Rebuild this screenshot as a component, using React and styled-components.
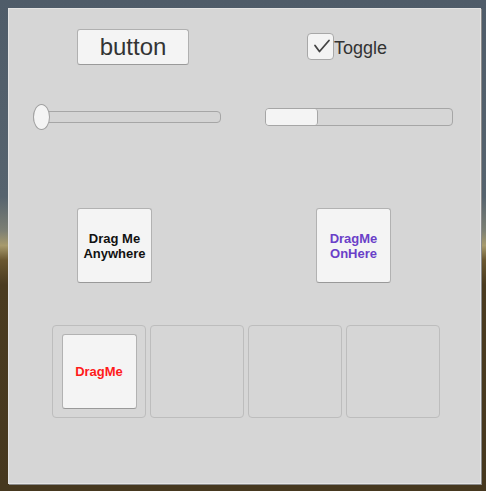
import styled, { createGlobalStyle } from "styled-components";

const GlobalStyle = createGlobalStyle`
  html, body {
    margin: 0;
    padding: 0;
  }
  body {
    width: 486px;
    height: 491px;
    overflow: hidden;
    font-family: "Liberation Sans", Arial, sans-serif;
    background: linear-gradient(
      to bottom,
      #4f5c69 0%,
      #56636e 40%,
      #7d8074 47%,
      #a79a6c 50%,
      #6a5730 53%,
      #4a3b20 58%,
      #46381f 100%
    );
  }
`;

const Scene = styled.div`
  padding: 8px 5px 7px 8px;
  height: 491px;
  box-sizing: border-box;
`;

const Panel = styled.div`
  height: 100%;
  box-sizing: border-box;
  background: #d6d6d6;
  border: 1px solid #e4e4e4;
  box-shadow: 1px 1px 0 #8a8a8a;
  padding: 19px 0 0 24px;
`;

const Grid = styled.div`
  display: grid;
  grid-template-columns: 188px 188px;
  column-gap: 44px;
`;

const Cell = styled.div`
  display: flex;
  align-items: center;
  height: ${p => p.h}px;
  margin-top: ${p => p.mt || 0}px;
  padding-left: ${p => p.pl || 0}px;
`;

const PushButton = styled.button`
  width: 112px;
  height: 36px;
  box-sizing: border-box;
  background: #f4f4f4;
  border: 1px solid #b0b0b0;
  border-bottom-color: #9a9a9a;
  border-radius: 3px;
  font-family: "Liberation Sans", Arial, sans-serif;
  font-size: 24px;
  color: #333;
  padding: 0;
  margin-top: 1px;
`;

const Toggle = styled.label`
  display: flex;
  align-items: center;
  font-size: 18px;
  color: #333;
`;

const ToggleText = styled.span`
  padding-top: 4px;
`;

const CheckBox = styled.span`
  width: 27px;
  height: 27px;
  box-sizing: border-box;
  background: #f4f4f4;
  border: 1px solid #a8a8a8;
  border-radius: 4px;
  display: flex;
  align-items: center;
  justify-content: center;
`;

const SliderTrack = styled.div`
  position: relative;
  width: 188px;
  height: 12px;
  box-sizing: border-box;
  background: #d4d4d4;
  border: 1px solid #a6a6a6;
  border-radius: 4px;
`;

const SliderHandle = styled.div`
  position: absolute;
  left: -1px;
  top: -8px;
  width: 17px;
  height: 26px;
  box-sizing: border-box;
  background: #f4f4f4;
  border: 1px solid #a0a0a0;
  border-radius: 50%;
`;

const ScrollTrack = styled.div`
  width: 189px;
  height: 18px;
  box-sizing: border-box;
  background: #d6d6d6;
  border: 1px solid #a6a6a6;
  border-radius: 4px;
  display: flex;
`;

const ScrollThumb = styled.div`
  width: ${p => p.w}px;
  height: 100%;
  background: #f4f4f4;
  border-right: 1px solid #a6a6a6;
  border-radius: 3px;
`;

const DragBox = styled.div`
  width: 75px;
  height: 75px;
  box-sizing: border-box;
  background: #f4f4f4;
  border: 1px solid #b2b2b2;
  border-bottom-color: #999;
  border-radius: 3px;
  display: flex;
  align-items: center;
  justify-content: center;
  text-align: center;
  font-weight: bold;
  font-size: 13px;
  line-height: 15px;
  color: ${p => p.color};
`;

const SlotRow = styled.div`
  display: flex;
  gap: 4px;
  margin-left: 19px;
  margin-top: 42px;
`;

const Slot = styled.div`
  width: 94px;
  height: 93px;
  box-sizing: border-box;
  border: 1px solid #bdbdbd;
  border-radius: 4px;
  background: #d6d6d6;
  display: flex;
  align-items: center;
  justify-content: center;
`;

function App() {
  return (
    <>
      <GlobalStyle />
      <Scene>
        <Panel>
          <Grid>
            <Cell h={36} pl={44}>
              <PushButton>button</PushButton>
            </Cell>
            <Cell h={36} pl={42}>
              <Toggle>
                <CheckBox>
                  <svg width="25" height="25" viewBox="0 0 25 25">
                    <polyline
                      points="7,11.5 11.5,17.5 21,6.5"
                      fill="none"
                      stroke="#444"
                      strokeWidth="1.8"
                      strokeLinecap="round"
                      strokeLinejoin="round"
                    />
                  </svg>
                </CheckBox>
                <ToggleText>Toggle</ToggleText>
              </Toggle>
            </Cell>
            <Cell h={106}>
              <SliderTrack>
                <SliderHandle />
              </SliderTrack>
            </Cell>
            <Cell h={106}>
              <ScrollTrack>
                <ScrollThumb w={51} />
              </ScrollTrack>
            </Cell>
            <Cell h={75} pl={44} mt={38}>
              <DragBox color="#111">
                Drag Me
                <br />
                Anywhere
              </DragBox>
            </Cell>
            <Cell h={75} pl={51} mt={38}>
              <DragBox color="#6a3fc8">
                DragMe
                <br />
                OnHere
              </DragBox>
            </Cell>
          </Grid>
          <SlotRow>
            <Slot>
              <DragBox color="#ff1a1a">DragMe</DragBox>
            </Slot>
            <Slot />
            <Slot />
            <Slot />
          </SlotRow>
        </Panel>
      </Scene>
    </>
  );
}

export default App;
